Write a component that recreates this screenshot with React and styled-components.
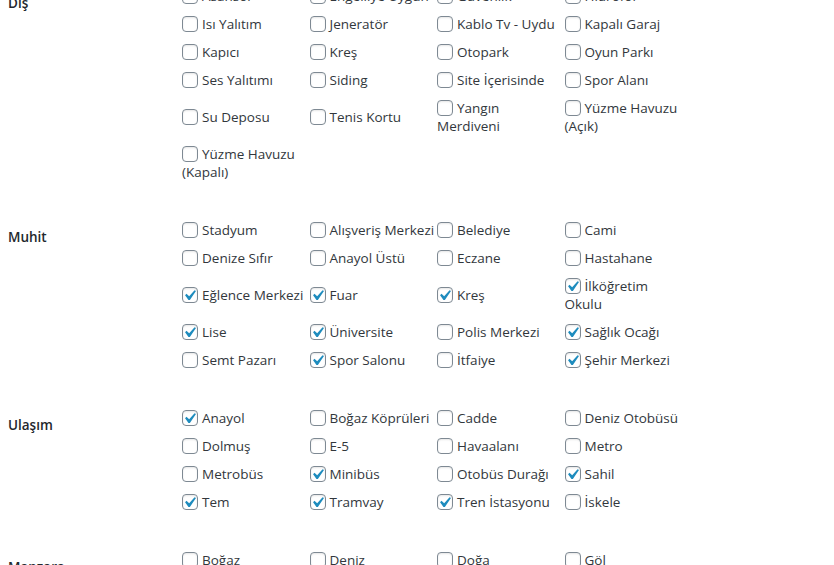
import React from 'react'
import styled, { createGlobalStyle } from 'styled-components'

const GlobalStyle = createGlobalStyle`
body{
    margin: 0;
    background: #ffffff;
    font-family: "Open Sans", "Noto Sans", sans-serif;
    overflow: hidden;
}
`

const sections = [
    {
        title: 'Dış',
        items: [
            ['Asansör'], ['Engelliye Uygun'], ['Güvenlik'], ['Hidrofor'],
            ['Isı Yalıtım'], ['Jeneratör'], ['Kablo Tv - Uydu'], ['Kapalı Garaj'],
            ['Kapıcı'], ['Kreş'], ['Otopark'], ['Oyun Parkı'],
            ['Ses Yalıtımı'], ['Siding'], ['Site İçerisinde'], ['Spor Alanı'],
            ['Su Deposu'], ['Tenis Kortu'], ['Yangın\nMerdiveni'], ['Yüzme Havuzu\n(Açık)'],
            ['Yüzme Havuzu\n(Kapalı)'],
        ],
    },
    {
        title: 'Muhit',
        items: [
            ['Stadyum'], ['Alışveriş Merkezi'], ['Belediye'], ['Cami'],
            ['Denize Sıfır'], ['Anayol Üstü'], ['Eczane'], ['Hastahane'],
            ['Eğlence Merkezi', true], ['Fuar', true], ['Kreş', true], ['İlköğretim\nOkulu', true],
            ['Lise', true], ['Üniversite', true], ['Polis Merkezi'], ['Sağlık Ocağı', true],
            ['Semt Pazarı'], ['Spor Salonu', true], ['İtfaiye'], ['Şehir Merkezi', true],
        ],
    },
    {
        title: 'Ulaşım',
        items: [
            ['Anayol', true], ['Boğaz Köprüleri'], ['Cadde'], ['Deniz Otobüsü'],
            ['Dolmuş'], ['E-5'], ['Havaalanı'], ['Metro'],
            ['Metrobüs'], ['Minibüs', true], ['Otobüs Durağı'], ['Sahil', true],
            ['Tem', true], ['Tramvay', true], ['Tren İstasyonu', true], ['İskele'],
        ],
    },
    {
        title: 'Manzara',
        items: [
            ['Boğaz'], ['Deniz'], ['Doğa'], ['Göl'],
            ['Havuz'], ['Park'], ['Şehir'], ['Vadi'],
        ],
    },
]

const Check = ({ checked }) => (
    <Box>
        {checked && (
            <svg viewBox="0 0 20 20" width="21" height="21">
                <path fill="#1e8cbe" d="M14.83 4.89l1.34.94-5.81 8.38H9.02L5.78 9.67l1.34-1.25 2.57 2.4z" />
            </svg>
        )}
    </Box>
)

const App = () => {
    return (
        <Page>
            <GlobalStyle />
            {sections.map(section => (
                <Section key={section.title}>
                    <Heading>{section.title}</Heading>
                    <List>
                        {section.items.map(([name, checked]) => (
                            <Item key={name}>
                                <Check checked={checked} />
                                {name}
                            </Item>
                        ))}
                    </List>
                </Section>
            ))}
        </Page>
    )
}

const Page = styled.div`
margin-top: -18px;
padding-left: 8px;
`

const Section = styled.div`
display: grid;
grid-template-columns: 174px 510px;
padding-bottom: 30px;
`

const Heading = styled.div`
margin-top: 12px;
font-weight: 600;
font-size: 13.5px;
line-height: 18px;
color: #23282d;
`

const List = styled.div`
display: grid;
grid-template-columns: repeat(4, 127.5px);
align-items: center;
`

const Item = styled.label`
padding: 5px 0;
font-size: 13.5px;
line-height: 18px;
color: #32373c;
white-space: pre-line;
`

const Box = styled.span`
position: relative;
display: inline-block;
box-sizing: border-box;
width: 16px;
height: 16px;
margin-right: 4px;
vertical-align: -3px;
border: 1px solid #7e8993;
border-radius: 4px;
background: #ffffff;
box-shadow: inset 0 1px 2px rgba(0, 0, 0, 0.1);

svg{
    position: absolute;
    left: -4px;
    top: -3px;
}
`

export default App
